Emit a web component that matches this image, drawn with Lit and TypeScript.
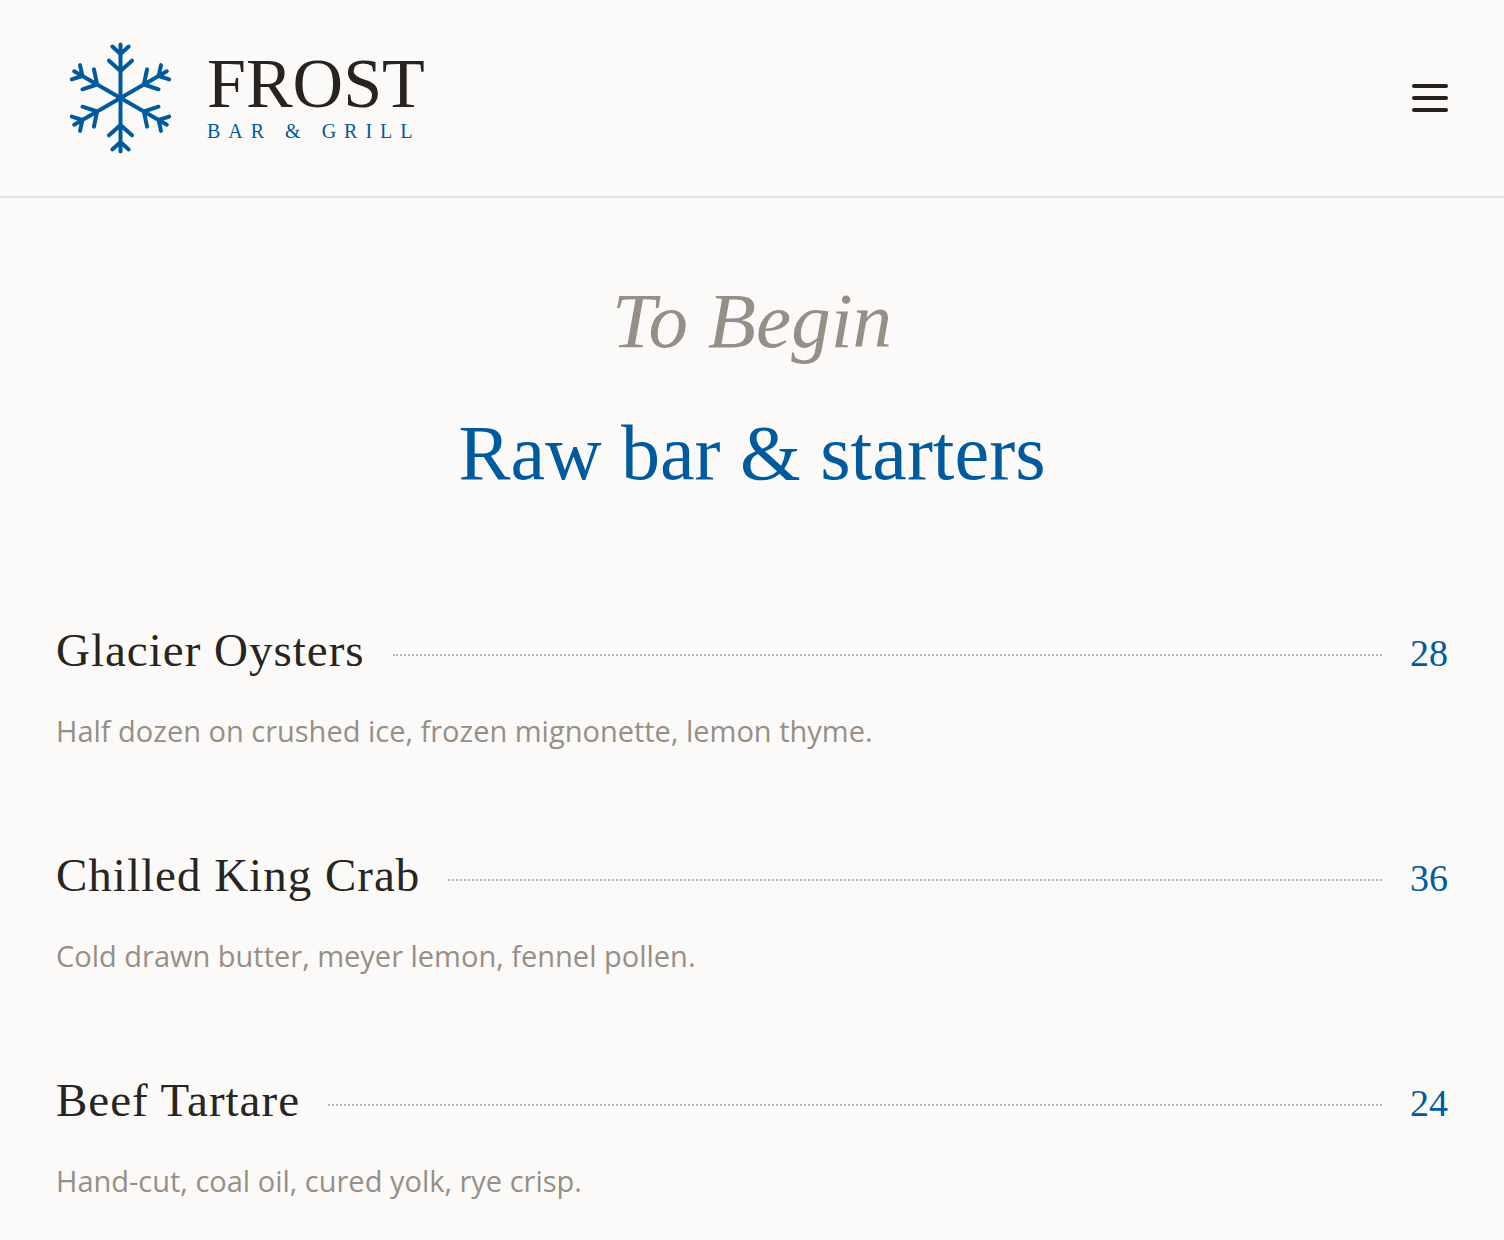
import { LitElement, html, css, svg } from "lit";
import { customElement, property, state } from "lit/decorators.js";

interface Dish {
  name: string;
  price: number;
  description: string;
}

const STARTERS: Dish[] = [
  {
    name: "Glacier Oysters",
    price: 28,
    description: "Half dozen on crushed ice, frozen mignonette, lemon thyme.",
  },
  {
    name: "Chilled King Crab",
    price: 36,
    description: "Cold drawn butter, meyer lemon, fennel pollen.",
  },
  {
    name: "Beef Tartare",
    price: 24,
    description: "Hand-cut, coal oil, cured yolk, rye crisp.",
  },
];

@customElement("frost-logo")
export class FrostLogo extends LitElement {
  static styles = css`
    :host {
      display: block;
    }
    .logo {
      display: flex;
      align-items: center;
      gap: 22px;
      color: #272320;
      text-decoration: none;
    }
    .flake {
      display: block;
      width: 129px;
      height: 128px;
      fill: none;
      stroke: #005a9e;
      stroke-width: 4;
      stroke-linecap: round;
      stroke-linejoin: round;
    }
    .words {
      display: flex;
      flex-direction: column;
      padding-bottom: 4px;
      font-family: "Liberation Serif", serif;
    }
    .name {
      font-size: 70px;
      line-height: 70px;
    }
    .tagline {
      font-size: 20px;
      line-height: 24px;
      letter-spacing: 8px;
      color: #005a9e;
    }
  `;

  render() {
    const arms = [0, 60, 120, 180, 240, 300];
    return html`
      <a class="logo" href="#" aria-label="Frost Bar & Grill">
        <svg class="flake" viewBox="-64 -64 128 128" aria-hidden="true">
          ${arms.map(
            (angle) => svg`
              <path
                transform="rotate(${angle})"
                d="M0 0V-53.5M-11.5 -37.3L0 -27L11.5 -37.3M-8.2 -51.5L0 -44L8.2 -51.5"
              />`
          )}
        </svg>
        <span class="words">
          <span class="name">FROST</span>
          <span class="tagline">BAR &amp; GRILL</span>
        </span>
      </a>
    `;
  }
}

@customElement("menu-dish")
export class MenuDish extends LitElement {
  @property({ attribute: false }) dish!: Dish;

  static styles = css`
    :host {
      display: block;
    }
    .row {
      display: flex;
      align-items: baseline;
      gap: 28px;
      font-family: "Liberation Serif", serif;
    }
    .name {
      margin: 0;
      font-size: 47px;
      line-height: 56px;
      font-weight: 400;
      letter-spacing: 1px;
      color: #272522;
    }
    .leader {
      flex: 1;
      align-self: center;
      margin-top: 6px;
      border-top: 2px dotted #b9b6b2;
    }
    .price {
      font-size: 38px;
      line-height: 56px;
      color: #005a9e;
    }
    .description {
      margin: 26px 0 0;
      font-family: "Open Sans", sans-serif;
      font-size: 29px;
      line-height: 48px;
      color: #968f86;
    }
  `;

  render() {
    return html`
      <div class="row">
        <h3 class="name">${this.dish.name}</h3>
        <span class="leader"></span>
        <span class="price">${this.dish.price}</span>
      </div>
      <p class="description">${this.dish.description}</p>
    `;
  }
}

@customElement("app-root")
export class AppRoot extends LitElement {
  @state() private open = false;

  static styles = css`
    :host {
      display: block;
      min-height: 100vh;
      background: #fcfaf8;
    }
    .bar {
      display: flex;
      align-items: center;
      justify-content: space-between;
      padding: 34px 56px;
      border-bottom: 2px solid #e5e3e1;
      background: radial-gradient(ellipse 32% 48% at 50% 0, #fafaf9 50%, #fcfaf8 100%);
    }
    .toggle {
      display: flex;
      flex-direction: column;
      gap: 8px;
      width: 36px;
      padding: 0;
      border: 0;
      background: none;
      cursor: pointer;
    }
    .line {
      width: 100%;
      height: 4px;
      border-radius: 2px;
      background: #25211e;
    }
    .menu {
      padding: 75px 56px 32px;
    }
    .heading {
      display: flex;
      flex-direction: column;
      gap: 40px;
      margin-bottom: 125px;
      text-align: center;
      font-family: "Liberation Serif", serif;
    }
    .eyebrow {
      margin: 0;
      font-size: 79px;
      line-height: 96px;
      font-style: italic;
      color: #968f86;
    }
    .title {
      margin: 0;
      font-size: 78px;
      line-height: 88px;
      font-weight: 400;
      color: #005a9e;
    }
    .dishes {
      display: flex;
      flex-direction: column;
      gap: 92px;
      margin: 0;
      padding: 0;
      list-style: none;
    }
  `;

  render() {
    return html`
      <header class="bar">
        <frost-logo></frost-logo>
        <button
          class="toggle"
          type="button"
          aria-label="Menu"
          aria-expanded=${this.open ? "true" : "false"}
          @click=${() => (this.open = !this.open)}
        >
          <span class="line"></span>
          <span class="line"></span>
          <span class="line"></span>
        </button>
      </header>
      <main class="menu">
        <div class="heading">
          <p class="eyebrow">To Begin</p>
          <h2 class="title">Raw bar &amp; starters</h2>
        </div>
        <ul class="dishes">
          ${STARTERS.map((dish) => html`<li><menu-dish .dish=${dish}></menu-dish></li>`)}
        </ul>
      </main>
    `;
  }
}
